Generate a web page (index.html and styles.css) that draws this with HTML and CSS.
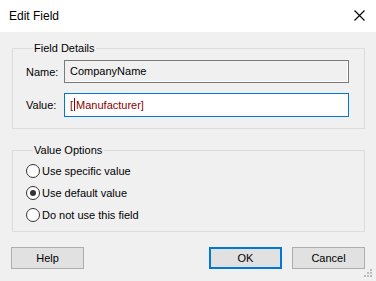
FILE: index.html
```html
<!DOCTYPE html>
<html lang="en">
<head>
    <meta charset="UTF-8">
    <meta name="viewport" content="width=device-width, initial-scale=1.0">
    <title>Edit Field</title>
    <link rel="stylesheet" href="styles.css">
</head>
<body>
    <div class="dialog">
        <div class="titlebar">
            <span class="title">Edit Field</span>
            <svg class="close" width="11" height="11" viewBox="0 0 11 11">
                <path d="M0.5 0.5 L10.5 10.5 M10.5 0.5 L0.5 10.5" stroke="#000" stroke-width="1.1" fill="none"/>
            </svg>
        </div>

        <fieldset class="group details">
            <legend>Field Details</legend>
            <div class="row">
                <label class="lbl">Name:</label>
                <div class="box readonly">CompanyName</div>
            </div>
            <div class="row">
                <label class="lbl">Value:</label>
                <div class="box active"><span class="val">[<span class="caret"></span>Manufacturer]</span></div>
            </div>
        </fieldset>

        <fieldset class="group options">
            <legend>Value Options</legend>
            <div class="radio"><span class="dot"></span>Use specific value</div>
            <div class="radio"><span class="dot checked"></span>Use default value</div>
            <div class="radio"><span class="dot"></span>Do not use this field</div>
        </fieldset>

        <div class="buttons">
            <button class="btn">Help</button>
            <span class="spacer"></span>
            <button class="btn default">OK</button>
            <button class="btn">Cancel</button>
        </div>
        <svg class="grip" width="9" height="9" viewBox="0 0 9 9">
            <rect x="6" y="0" width="2" height="2" fill="#bcbcbc"/>
            <rect x="3" y="3" width="2" height="2" fill="#bcbcbc"/>
            <rect x="6" y="3" width="2" height="2" fill="#bcbcbc"/>
            <rect x="0" y="6" width="2" height="2" fill="#bcbcbc"/>
            <rect x="3" y="6" width="2" height="2" fill="#bcbcbc"/>
            <rect x="6" y="6" width="2" height="2" fill="#bcbcbc"/>
        </svg>
    </div>
</body>
</html>
```

FILE: styles.css
```css
body {
    margin: 0;
    background-color: #f0f0f0;
    font-family: "Segoe UI", "Liberation Sans", Arial, sans-serif;
    font-size: 11px;
    color: #000;
}
.dialog {
    position: relative;
    width: 376px;
    height: 281px;
    overflow: hidden;
}
.titlebar {
    height: 32px;
    background-color: #ffffff;
    display: flex;
    align-items: center;
    justify-content: space-between;
    padding: 0 11px 0 9px;
}
.title {
    font-size: 12px;
    margin-top: -1px;
}
.close {
    display: block;
    margin-top: -1px;
}
.group {
    margin: 8px 11px 0 12px;
    padding: 0 15px 11px 13px;
    border: 1px solid #dcdcdc;
    min-width: 0;
}
.group legend {
    padding: 0 1px;
    margin-left: 7px;
    line-height: 16px;
}
.options {
    margin-top: 13px;
    padding-top: 2px;
    padding-bottom: 5px;
}
.row {
    display: flex;
    align-items: center;
    margin-top: 4px;
}
.row + .row {
    margin-top: 10px;
}
.lbl {
    width: 38px;
    color: #000;
}
.box {
    flex: 1;
    box-sizing: border-box;
    padding: 0 5px;
    white-space: nowrap;
}
.readonly {
    height: 23px;
    line-height: 21px;
    border: 1px solid #7a7a7a;
    background-color: #f0f0f0;
    box-shadow: inset -1px -1px 0 #fff;
}
.active {
    height: 24px;
    line-height: 22px;
    border: 1px solid #0078d7;
    background-color: #ffffff;
}
.val {
    color: #8b0000;
}
.caret {
    display: inline-block;
    width: 1px;
    height: 13px;
    margin: 0 1px;
    background-color: #8b0000;
    vertical-align: -2px;
}
.radio {
    display: flex;
    align-items: center;
    height: 22px;
}
.dot {
    box-sizing: border-box;
    width: 14px;
    height: 14px;
    border: 1px solid #333;
    border-radius: 50%;
    background-color: #fff;
    margin-right: 2px;
    position: relative;
}
.dot.checked::after {
    content: "";
    position: absolute;
    left: 3px;
    top: 3px;
    width: 6px;
    height: 6px;
    border-radius: 50%;
    background-color: #333;
}
.buttons {
    display: flex;
    margin: 15px 11px 0 11px;
}
.spacer {
    flex: 1;
}
.btn {
    width: 73px;
    height: 22px;
    font-family: inherit;
    font-size: 11px;
    background-color: #e1e1e1;
    border: 1px solid #adadad;
    color: #000;
    padding: 0;
}
.btn + .btn {
    margin-left: 10px;
}
.default {
    border: 2px solid #0078d7;
}
.grip {
    position: absolute;
    right: 3px;
    bottom: 3px;
}
```
